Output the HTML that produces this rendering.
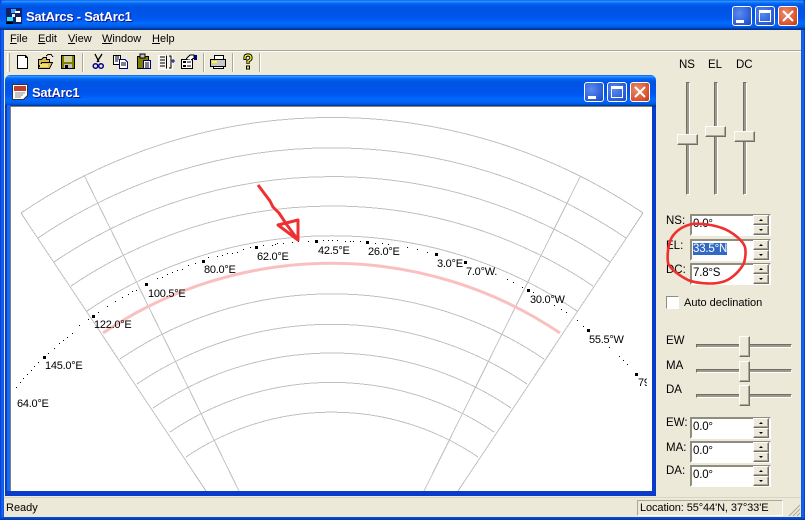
<!DOCTYPE html>
<html><head><meta charset="utf-8"><title>SatArcs</title>
<style>
*{box-sizing:border-box}
html,body{margin:0;padding:0;width:805px;height:520px;overflow:hidden;background:#ece9d8;font-family:"Liberation Sans",sans-serif;font-size:11px;color:#000}
.a{position:absolute}
.tb{background:linear-gradient(180deg,#0058ee 0%,#3593ff 4%,#288eff 6%,#127dff 8%,#036ffc 10%,#0262ee 14%,#0057e5 20%,#0054e3 24%,#0055eb 56%,#005bf5 66%,#026afe 76%,#0062ef 86%,#0052d6 92%,#0040ab 94%,#003092 100%)}
.tt{color:#fff;font-weight:bold;font-size:13px;letter-spacing:-.25px;text-shadow:1px 1px 0 #0f1089;white-space:nowrap}
.btn{position:absolute;width:20px;height:20px;border:1px solid #fff;border-radius:3px;background:radial-gradient(circle at 35% 35%,#5a8cf0,#2a5bd8 70%,#1c45b8)}
.btn.c{background:radial-gradient(circle at 35% 35%,#e8906e,#d8502c 70%,#b83a18)}
.m{position:absolute;top:33px;font-size:11px;line-height:13px}
.m u{text-decoration:underline}
.sep{position:absolute;top:53px;width:2px;height:19px;border-left:1px solid #aca899;border-right:1px solid #fff}
.l{position:absolute;font-size:11.5px;line-height:13px;white-space:nowrap}
.thumb{position:absolute;background:#ece9d8;border:1px solid;border-color:#fff #716f64 #716f64 #fff;box-shadow:inset -1px -1px 0 #aca899}
.vt{position:absolute;top:82px;width:4px;height:113px;background:#9d9a8b;border-left:1px solid #716f64;border-top:1px solid #716f64;border-right:1px solid #fff;border-bottom:1px solid #fff}
.ht{position:absolute;left:696px;width:96px;height:4px;background:#9d9a8b;border-top:1px solid #716f64;border-left:1px solid #716f64;border-right:1px solid #fff;border-bottom:1px solid #fff}
.ed{position:absolute;left:690px;width:81px;height:22px;background:#fff;border:2px solid;border-color:#8f8d80 #fff #fff #8f8d80;font-size:11.5px;letter-spacing:-.2px;line-height:16px;padding-left:1px;white-space:nowrap}
.sp{position:absolute;left:753px;width:16px;height:10px;background:#ece9d8;border:1px solid;border-color:#fff #716f64 #716f64 #fff;box-shadow:inset -1px -1px 0 #aca899}
.sp:after{content:"";position:absolute;left:5px;top:3px;border-left:2px solid transparent;border-right:2px solid transparent}
.sp.u:after{border-bottom:2px solid #000}
.sp.d:after{border-top:2px solid #000}
</style></head><body>
<div class="a" style="left:0;top:0;width:805px;height:520px;background:#0a3dc8"></div>
<div class="a" style="left:0;top:0;width:4px;height:520px;background:linear-gradient(90deg,#0831d9,#166aee 50%,#0855dd)"></div>
<div class="a" style="left:801px;top:0;width:4px;height:520px;background:linear-gradient(270deg,#0831d9,#166aee 50%,#0855dd)"></div>
<div class="a" style="left:0;top:517px;width:805px;height:3px;background:linear-gradient(#0855dd,#0831a9)"></div>
<div class="a tb" style="left:0;top:0;width:805px;height:30px;border-radius:6px 6px 0 0"></div>
<div class="a" style="left:4px;top:30px;width:797px;height:487px;background:#ece9d8"></div>
<svg class="a" style="left:6px;top:8px" width="16" height="16" shape-rendering="crispEdges"><rect width="16" height="16" fill="#10206a"/><rect x="5" y="1" width="5" height="4" fill="#38a0f0"/><rect x="9" y="3" width="5" height="2" fill="#fff"/><rect x="1" y="9" width="6" height="4" fill="#30e0f0"/><rect x="10" y="9" width="5" height="5" fill="#fff"/><rect x="6" y="6" width="3" height="3" fill="#eee"/><rect x="0" y="14" width="7" height="2" fill="#000"/></svg>
<div class="a tt" style="left:26px;top:9px">SatArcs - SatArc1</div>
<div class="btn" style="left:732px;top:6px"><div class="a" style="left:3px;top:13px;width:8px;height:3px;background:#fff"></div></div>
<div class="btn" style="left:755px;top:6px"><div class="a" style="left:3px;top:3px;width:12px;height:12px;border:1px solid #fff;border-top-width:3px"></div></div>
<div class="btn c" style="left:778px;top:6px"><svg class="a" style="left:3px;top:3px" width="12" height="12"><path d="M1 1L11 11M11 1L1 11" stroke="#fff" stroke-width="2"/></svg></div>

<div class="m" style="left:10px"><u>F</u>ile</div>
<div class="m" style="left:38px"><u>E</u>dit</div>
<div class="m" style="left:68px"><u>V</u>iew</div>
<div class="m" style="left:102px"><u>W</u>indow</div>
<div class="m" style="left:152px"><u>H</u>elp</div>

<div class="a" style="left:4px;top:50px;width:797px;height:1px;background:#aca899"></div>
<div class="a" style="left:4px;top:51px;width:797px;height:1px;background:#fff"></div>
<div class="a" style="left:7px;top:53px;width:3px;height:19px;border-left:1px solid #fff;border-right:1px solid #aca899"></div>
<div class="sep" style="left:82px"></div><div class="sep" style="left:203px"></div><div class="sep" style="left:232px"></div><div class="sep" style="left:259px"></div>

<svg class="a" style="left:0;top:50px" width="270" height="24" shape-rendering="crispEdges">
<path d="M17.5 5.5H25.5L27.5 7.5V18.5H17.5Z" fill="#fff" stroke="#000"/><path d="M25.5 5.5V7.5H27.5" fill="none" stroke="#000"/>
<path d="M38.5 9.5H41.5L43.5 7.5H46.5V9.5H49.5V12.5H52.5L49.5 18.5H38.5Z" fill="#d8c050" stroke="#000"/><path d="M39 17L42 12.5H52" fill="none" stroke="#000"/><path d="M46 6L48 4.5H51L53 7" fill="none" stroke="#000"/><rect x="40" y="14" width="8" height="3" fill="#f0e070"/>
<rect x="61.5" y="5.5" width="13" height="13" fill="#808000" stroke="#000"/><rect x="64" y="6" width="8" height="6" fill="#d0d0a0"/><rect x="64" y="14" width="8" height="4" fill="#c0c0c0"/><rect x="65" y="15" width="3" height="3" fill="#000"/>
</svg>
<svg class="a" style="left:0;top:50px" width="270" height="24">
<path d="M95 4L99 12M102 4L97 12" stroke="#000" stroke-width="1.3" fill="none"/><circle cx="95.5" cy="16" r="2.3" fill="none" stroke="#000090" stroke-width="1.5"/><circle cx="101" cy="16" r="2.3" fill="none" stroke="#000090" stroke-width="1.5"/>
<path d="M245 10V7.5Q245 5 248 5Q251 5 251 8Q251 10 248 11V14" fill="none" stroke="#000" stroke-width="3.2"/><path d="M245 9V7.5Q245 5 248 5Q251 5 251 8Q251 10 248 11V13.5" fill="none" stroke="#ffff30" stroke-width="1.3"/><rect x="246.5" y="16" width="3" height="3" fill="#ffff30" stroke="#000"/>
</svg>
<svg class="a" style="left:0;top:50px" width="270" height="24" shape-rendering="crispEdges">
<path d="M113.5 5.5H120.5V14.5H113.5Z" fill="#fff" stroke="#000"/><path d="M119.5 9.5H125L127.5 12V18.5H119.5Z" fill="#fff" stroke="#000080"/><path d="M115 7H119M115 9H119M115 11H118M121 13H126M121 15H126" stroke="#000" fill="none"/>
<rect x="137.5" y="6.5" width="11" height="12" fill="#808000" stroke="#000"/><rect x="140" y="4" width="5" height="4" fill="#c0c0c0" stroke="#000"/><path d="M143.5 10.5H150.5V18.5H143.5Z" fill="#fff" stroke="#000080"/><path d="M145 13H149M145 15H149M145 17H149" stroke="#000"/>
<rect x="158.5" y="5.5" width="14" height="14" fill="#f6f4ec" stroke="#fff"/><path d="M160 7H165M160 10H165M160 13H165M160 16H165" stroke="#000"/><path d="M166.5 5.5V18.5" fill="none" stroke="#000"/><path d="M169 6H171V18H169" fill="none" stroke="#000"/><path d="M171 11H175M173 9V13" stroke="#000080"/>
<path d="M181.5 9.5H192.5V18.5H181.5Z" fill="#fff" stroke="#000"/><path d="M183 11H186V13H183ZM183 15H186V17H183Z" fill="#000"/><path d="M187 12H191M187 16H191" stroke="#000"/><path d="M186 9L190 5H194V8L191 10" fill="#fff" stroke="#000"/><rect x="194" y="5" width="3" height="5" fill="#000080"/>
<path d="M214.5 5.5H223.5V9.5H214.5Z" fill="#fff" stroke="#000"/><path d="M210.5 9.5H225.5V16.5H210.5Z" fill="#c8c8c8" stroke="#000"/><path d="M213.5 16.5H223.5V18.5H213.5Z" fill="#fff" stroke="#000"/><rect x="212" y="11" width="5" height="2" fill="#ff0"/>
</svg>

<!-- child window -->
<div class="a" style="left:5px;top:105px;width:651px;height:391px;background:#0a3ccc"></div>
<div class="a tb" style="left:5px;top:75px;width:651px;height:32px;border-radius:5px 5px 0 0"></div>
<div class="a" style="left:7px;top:105px;width:3px;height:386px;background:#166aee"></div>
<div class="a" style="left:10px;top:106px;width:642px;height:385px;background:#808080"></div>
<svg class="a" style="left:12px;top:84px" width="16" height="16" shape-rendering="crispEdges"><path d="M0.5 0.5H15.5V11.5L11.5 15.5H0.5Z" fill="#fff" stroke="#333"/><rect x="2" y="2" width="12" height="5" fill="#c04030"/><path d="M3 9H13M3 11H11M3 13H9" stroke="#888"/></svg>
<div class="a tt" style="left:32px;top:85px">SatArc1</div>
<div class="btn" style="left:584px;top:82px"><div class="a" style="left:3px;top:13px;width:8px;height:3px;background:#fff"></div></div>
<div class="btn" style="left:607px;top:82px"><div class="a" style="left:3px;top:3px;width:12px;height:12px;border:1px solid #fff;border-top-width:3px"></div></div>
<div class="btn c" style="left:630px;top:82px"><svg class="a" style="left:3px;top:3px" width="12" height="12"><path d="M1 1L11 11M11 1L1 11" stroke="#fff" stroke-width="2"/></svg></div>

<!-- canvas -->
<div class="a" style="left:11px;top:107px;width:641px;height:384px;background:#fff"></div>
<svg class="a" style="left:11px;top:107px" width="636" height="384" viewBox="11 107 636 384">
<g fill="none" stroke="#c0c0c0" stroke-width="1" shape-rendering="crispEdges">
<path d="M21 213L206 491M84 175L239 491M580 177L424 491M643 213L458 491"/>
<path d="M21 213A554 554 0 0 1 643 213"/>
<path d="M38 238A524.6 524.6 0 0 1 626 238"/>
<path d="M54 262A495.2 495.2 0 0 1 610 262"/>
<path d="M71 286A465.8 465.8 0 0 1 593 286"/>
<path d="M87 311A436.4 436.4 0 0 1 577 311"/>
<path d="M120 359A377.6 377.6 0 0 1 544 359"/>
<path d="M137 384A348.2 348.2 0 0 1 527 384"/>
<path d="M153 408A318.8 318.8 0 0 1 511 408"/>
<path d="M170 432A289.4 289.4 0 0 1 494 432"/>
<path d="M186 457A260 260 0 0 1 478 457"/>
</g>
<path d="M103 333A409 409 0 0 1 560 333" fill="none" stroke="#fac0c0" stroke-width="3"/>
<g fill="#000" shape-rendering="crispEdges">
<path d="M43 356h3v3h-3zM92 315h3v3h-3zM145 283h3v3h-3zM202 260h3v3h-3zM255 246h3v3h-3zM315 240h3v3h-3zM366 241h3v3h-3zM435 253h3v3h-3zM464 261h3v3h-3zM527 289h3v3h-3zM587 329h3v3h-3zM635 373h3v3h-3z"/>
<path d="M16 387h1v1h-1zM20 382h1v1h-1zM23 378h1v1h-1zM27 374h1v1h-1zM31 370h1v1h-1zM34 366h1v1h-1zM38 362h1v1h-1zM48 353h1v1h-1zM54 348h1v1h-1zM59 343h1v1h-1zM63 340h1v1h-1zM67 337h1v1h-1zM72 333h1v1h-1zM79 325h1v1h-1zM88 319h1v1h-1zM98 312h1v1h-1zM107 306h1v1h-1zM115 301h1v1h-1zM122 297h1v1h-1zM128 294h1v1h-1zM132 291h1v1h-1zM136 290h1v1h-1zM157 278h1v1h-1zM162 277h1v1h-1zM167 274h1v1h-1zM172 272h1v1h-1zM177 270h1v1h-1zM182 269h1v1h-1zM188 265h1v1h-1zM195 263h1v1h-1zM208 257h1v1h-1zM217 256h1v1h-1zM222 255h1v1h-1zM227 253h1v1h-1zM232 253h1v1h-1zM237 252h1v1h-1zM243 249h1v1h-1zM250 247h1v1h-1zM263 245h1v1h-1zM272 245h1v1h-1zM275 244h1v1h-1zM277 243h1v1h-1zM283 243h1v1h-1zM292 242h1v1h-1zM298 241h1v1h-1zM308 241h1v1h-1zM323 240h1v1h-1zM328 240h1v1h-1zM332 240h1v1h-1zM337 240h1v1h-1zM345 241h1v1h-1zM350 241h1v1h-1zM353 241h1v1h-1zM360 241h1v1h-1zM375 243h1v1h-1zM382 243h1v1h-1zM388 244h1v1h-1zM407 247h1v1h-1zM417 249h1v1h-1zM427 252h1v1h-1zM507 279h1v1h-1zM513 282h1v1h-1zM522 287h1v1h-1zM533 292h1v1h-1zM554 305h1v1h-1zM561 309h1v1h-1zM566 312h1v1h-1zM577 320h1v1h-1zM583 326h1v1h-1zM609 347h1v1h-1zM619 356h1v1h-1zM623 360h1v1h-1zM627 364h1v1h-1z"/>
</g>
<g font-family="Liberation Sans, sans-serif" font-size="11" fill="#000" style="letter-spacing:-.25px">
<text x="17" y="407">64.0°E</text><text x="45" y="369">145.0°E</text><text x="94" y="328">122.0°E</text><text x="148" y="297">100.5°E</text><text x="204" y="273">80.0°E</text><text x="257" y="260">62.0°E</text><text x="318" y="254">42.5°E</text><text x="368" y="255">26.0°E</text><text x="437" y="267">3.0°E</text><text x="466" y="275">7.0°W.</text><text x="530" y="303">30.0°W</text><text x="589" y="343">55.5°W</text><text x="638" y="386">79</text>
</g>
<path d="M258 185L264 193L270 201L273 207L279 213L287 225L298 240M298 240V220L278 225Z" fill="none" stroke="#f03030" stroke-width="3" stroke-linejoin="round"/>
</svg>

<!-- right panel -->
<div class="l" style="left:679px;top:59px">NS</div><div class="l" style="left:708px;top:59px">EL</div><div class="l" style="left:736px;top:59px">DC</div>
<div class="vt" style="left:686px"></div><div class="vt" style="left:714px"></div><div class="vt" style="left:743px"></div>
<div class="thumb" style="left:677px;top:134px;width:21px;height:11px"></div>
<div class="thumb" style="left:705px;top:126px;width:21px;height:11px"></div>
<div class="thumb" style="left:734px;top:131px;width:21px;height:11px"></div>

<div class="l" style="left:666px;top:215px">NS:</div><div class="l" style="left:666px;top:240px">EL:</div><div class="l" style="left:666px;top:264px">DC:</div>
<div class="ed" style="top:214px">0.0°</div>
<div class="ed" style="top:239px"><span style="background:#316ac5;color:#fff">33.5°N</span></div>
<div class="ed" style="top:263px">7.8°S</div>
<div class="sp u" style="top:215px"></div><div class="sp d" style="top:225px"></div>
<div class="sp u" style="top:240px"></div><div class="sp d" style="top:250px"></div>
<div class="sp u" style="top:264px"></div><div class="sp d" style="top:274px"></div>
<div class="a" style="left:666px;top:296px;width:13px;height:13px;background:#fff;border:1px solid;border-color:#8f8d80 #fff #fff #8f8d80"></div>
<div class="l" style="left:684px;top:297px;font-size:11px">Auto declination</div>

<div class="l" style="left:666px;top:335px">EW</div><div class="l" style="left:666px;top:360px">MA</div><div class="l" style="left:666px;top:384px">DA</div>
<div class="ht" style="top:344px"></div><div class="ht" style="top:369px"></div><div class="ht" style="top:394px"></div>
<div class="thumb" style="left:739px;top:336px;width:11px;height:21px"></div>
<div class="thumb" style="left:739px;top:361px;width:11px;height:21px"></div>
<div class="thumb" style="left:739px;top:385px;width:11px;height:21px"></div>

<div class="l" style="left:666px;top:417px">EW:</div><div class="l" style="left:666px;top:442px">MA:</div><div class="l" style="left:666px;top:465px">DA:</div>
<div class="ed" style="top:417px">0.0°</div><div class="ed" style="top:441px">0.0°</div><div class="ed" style="top:465px">0.0°</div>
<div class="sp u" style="top:418px"></div><div class="sp d" style="top:428px"></div>
<div class="sp u" style="top:442px"></div><div class="sp d" style="top:452px"></div>
<div class="sp u" style="top:466px"></div><div class="sp d" style="top:476px"></div>

<svg class="a" style="left:0;top:0;pointer-events:none" width="805" height="520"><path d="M692 224C683 226 676 231 672 237C668 244 667 255 668 263C670 269 680 276 688 280C695 283 712 285 722 282C731 280 740 271 744 263C746 256 746 252 745 247C743 241 733 232 722 228C714 225 700 223 692 224Z" fill="none" stroke="#f03030" stroke-width="2.6"/></svg>

<!-- status bar -->
<div class="a" style="left:4px;top:497px;width:797px;height:1px;background:#d8d5c4"></div>
<div class="a" style="left:6px;top:502px;font-size:11px;line-height:13px">Ready</div>
<div class="a" style="left:637px;top:500px;width:146px;height:16px;border:1px solid;border-color:#aca899 #fff #fff #aca899;font-size:11px;line-height:14px;padding-left:2px;white-space:nowrap;letter-spacing:-.1px">Location: 55°44'N, 37°33'E</div>
<svg class="a" style="left:788px;top:504px" width="13" height="13"><path d="M12 1L1 12M12 5L5 12M12 9L9 12" stroke="#aca899" fill="none"/></svg>
</body></html>
